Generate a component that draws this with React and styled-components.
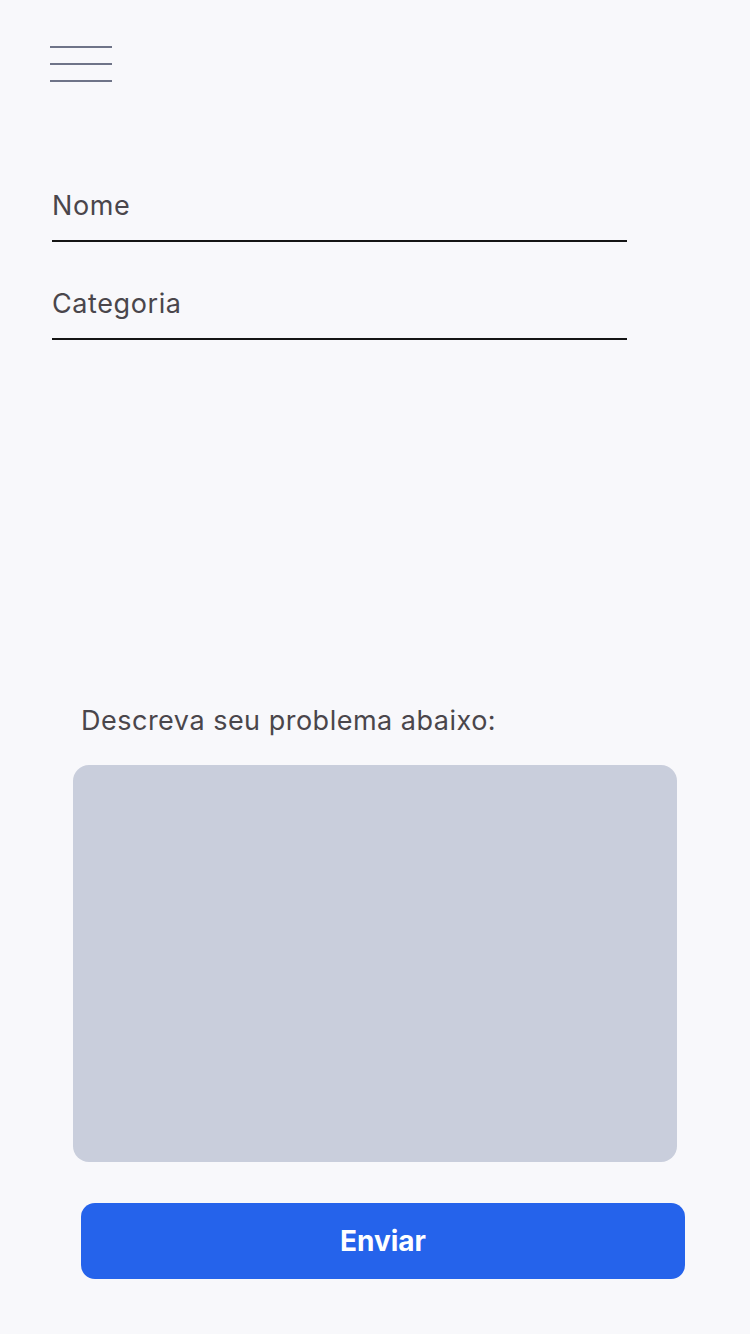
import React from "react";
import styled, { createGlobalStyle } from "styled-components";

const Global = createGlobalStyle`
  * { box-sizing: border-box; }
  html, body { margin: 0; padding: 0; background: #f8f8fb; }
  body { font-family: Inter, "Noto Sans", sans-serif; }
`;

const Page = styled.div`
  width: 750px;
  min-height: 1334px;
  background: #f8f8fb;
  display: flex;
  flex-direction: column;
`;

const Header = styled.header`
  padding: 46px 0 0 50px;
  height: 82px;
`;

const MenuButton = styled.button`
  display: flex;
  flex-direction: column;
  gap: 15px;
  width: 62px;
  padding: 0;
  border: 0;
  background: none;
  cursor: pointer;
`;

const MenuLine = styled.span`
  display: block;
  width: 62px;
  height: 2px;
  background: #6f7488;
`;

const Form = styled.form`
  display: flex;
  flex-direction: column;
  gap: 44px;
  margin: 106px 0 0 52px;
  width: 575px;
`;

const Field = styled.div`
  font-size: 27px;
  line-height: 36px;
  letter-spacing: 0.6px;
  color: #4a464b;
  padding-bottom: 16px;
  border-bottom: 2px solid #151515;
`;

const Bottom = styled.section`
  margin-top: 363px;
  display: flex;
  flex-direction: column;
`;

const Label = styled.div`
  font-size: 27px;
  line-height: 36px;
  letter-spacing: 0.5px;
  color: #4a464b;
  padding-left: 81px;
`;

const TextArea = styled.div`
  margin: 26px 0 0 73px;
  width: 604px;
  height: 397px;
  border-radius: 16px;
  background: #c9cedc;
`;

const SendButton = styled.button`
  margin: 41px 0 0 81px;
  width: 604px;
  height: 76px;
  border: 0;
  border-radius: 14px;
  background: #2563eb;
  color: #ffffff;
  font-family: Inter, "Noto Sans", sans-serif;
  font-size: 28px;
  font-weight: 700;
  cursor: pointer;
`;

export default function App() {
  return (
    <>
      <Global />
      <Page>
        <Header>
          <MenuButton type="button" aria-label="menu">
            <MenuLine />
            <MenuLine />
            <MenuLine />
          </MenuButton>
        </Header>
        <Form>
          <Field>Nome</Field>
          <Field>Categoria</Field>
        </Form>
        <Bottom>
          <Label>Descreva seu problema abaixo:</Label>
          <TextArea />
          <SendButton type="button">Enviar</SendButton>
        </Bottom>
      </Page>
    </>
  );
}
